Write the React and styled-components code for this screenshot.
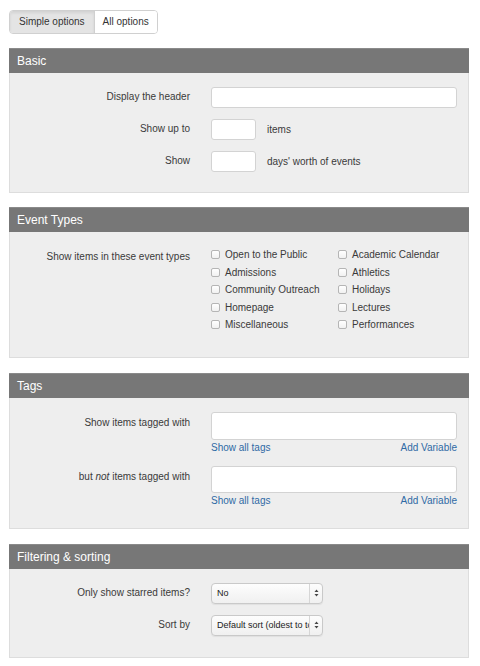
import React from "react";
import styled, { createGlobalStyle } from "styled-components";

const Global = createGlobalStyle`
  html, body { margin: 0; padding: 0; background: #fff; }
  body { font-family: "Liberation Sans", Arial, Helvetica, sans-serif; color: #3a3a3a; font-size: 10px; }
  * { box-sizing: border-box; }
`;

const Page = styled.div`
  width: 480px;
  padding: 10px 11px 0 9px;
`;

const Tabs = styled.div`
  display: inline-flex;
  border: 1px solid #d0d0d0;
  border-radius: 4px;
  overflow: hidden;
  margin-bottom: 14px;
`;

const Tab = styled.div`
  height: 22px;
  line-height: 22px;
  padding: 0 ${(p) => (p.$active ? "9px" : "8px")};
  font-size: 10px;
  color: #333;
  background: ${(p) => (p.$active ? "#e4e4e4" : "#fff")};
  box-shadow: ${(p) => (p.$active ? "inset 0 2px 3px rgba(0,0,0,0.08)" : "none")};
  & + & { border-left: 1px solid #d0d0d0; }
`;

const Panel = styled.section`
  margin-bottom: ${(p) => p.$gap || 14}px;
`;

const PanelHeader = styled.div`
  height: 25px;
  line-height: 25px;
  background: #777;
  border-top: 1px solid #8a8a8a;
  color: #fff;
  font-size: 12px;
  padding-left: 8px;
`;

const PanelBody = styled.div`
  background: #eee;
  border: 1px solid #ddd;
  border-top: none;
  padding: 14px 11px ${(p) => p.$pb || 20}px 0;
  display: flex;
  flex-direction: column;
  gap: ${(p) => p.$gap || 11}px;
`;

const Row = styled.div`
  display: grid;
  grid-template-columns: 180px 1fr;
  column-gap: 21px;
  align-items: start;
`;

const Label = styled.div`
  text-align: right;
  font-size: 10px;
  color: #3a3a3a;
  line-height: 14px;
  padding-top: ${(p) => p.$pt ?? 3}px;
  white-space: nowrap;
`;

const Inline = styled.div`
  display: flex;
  align-items: center;
  gap: 11px;
  height: 21px;
`;

const TextInput = styled.div`
  width: ${(p) => p.$w || "100%"};
  height: ${(p) => p.$h || 21}px;
  background: #fff;
  border: 1px solid #d3d3d3;
  border-radius: 3px;
`;

const Suffix = styled.span`
  font-size: 10px;
  color: #3a3a3a;
`;

const CheckGrid = styled.div`
  display: grid;
  grid-template-columns: 127px 127px;
  grid-auto-flow: column;
  grid-template-rows: repeat(5, 17.5px);
`;

const CheckItem = styled.label`
  display: flex;
  align-items: center;
  gap: 5px;
  font-size: 10px;
  color: #3a3a3a;
  white-space: nowrap;
`;

const Box = styled.span`
  width: 9px;
  height: 9px;
  border: 1px solid #b5b5b5;
  border-radius: 2px;
  background: linear-gradient(#fff, #f1f1f1);
  flex: none;
`;

const TagField = styled.div`
  display: flex;
  flex-direction: column;
  gap: 1px;
`;

const LinkRow = styled.div`
  display: flex;
  justify-content: space-between;
  line-height: 13px;
`;

const Link = styled.a`
  color: #2e6aa5;
  font-size: 10px;
  text-decoration: none;
`;

const Select = styled.div`
  display: flex;
  width: 112px;
  height: 21px;
  border: 1px solid #c9c9c9;
  border-radius: 4px;
  background: linear-gradient(#fdfdfd, #f0f0f0);
  box-shadow: 0 1px 1px rgba(0,0,0,0.06);
  overflow: hidden;
`;

const SelectText = styled.span`
  flex: 1;
  min-width: 0;
  overflow: hidden;
  white-space: nowrap;
  font-size: 9px;
  line-height: 19px;
  padding-left: 5px;
  color: #222;
`;

const SelectArrow = styled.span`
  width: 13px;
  flex: none;
  border-left: 1px solid #d6d6d6;
  display: flex;
  align-items: center;
  justify-content: center;
`;

const Arrows = () => (
  <svg width="5" height="8" viewBox="0 0 5 8">
    <path d="M2.5 0.5 L4.5 3 L0.5 3 Z" fill="#444" />
    <path d="M2.5 7.5 L4.5 5 L0.5 5 Z" fill="#444" />
  </svg>
);

const types = [
  "Open to the Public",
  "Admissions",
  "Community Outreach",
  "Homepage",
  "Miscellaneous",
  "Academic Calendar",
  "Athletics",
  "Holidays",
  "Lectures",
  "Performances",
];

export default function App() {
  return (
    <Page>
      <Global />
      <Tabs>
        <Tab $active>Simple options</Tab>
        <Tab>All options</Tab>
      </Tabs>

      <Panel>
        <PanelHeader>Basic</PanelHeader>
        <PanelBody $pb={20}>
          <Row>
            <Label>Display the header</Label>
            <TextInput />
          </Row>
          <Row>
            <Label>Show up to</Label>
            <Inline>
              <TextInput $w="45px" />
              <Suffix>items</Suffix>
            </Inline>
          </Row>
          <Row>
            <Label>Show</Label>
            <Inline>
              <TextInput $w="45px" />
              <Suffix>days' worth of events</Suffix>
            </Inline>
          </Row>
        </PanelBody>
      </Panel>

      <Panel $gap={15}>
        <PanelHeader>Event Types</PanelHeader>
        <PanelBody $pb={23}>
          <Row>
            <Label $pt={4}>Show items in these event types</Label>
            <CheckGrid>
              {types.map((t) => (
                <CheckItem key={t}>
                  <Box />
                  {t}
                </CheckItem>
              ))}
            </CheckGrid>
          </Row>
        </PanelBody>
      </Panel>

      <Panel $gap={15}>
        <PanelHeader>Tags</PanelHeader>
        <PanelBody $pb={21} $gap={12}>
          <Row>
            <Label $pt={4}>Show items tagged with</Label>
            <TagField>
              <TextInput $h={28} />
              <LinkRow>
                <Link href="#">Show all tags</Link>
                <Link href="#">Add Variable</Link>
              </LinkRow>
            </TagField>
          </Row>
          <Row>
            <Label $pt={4}>
              but <i>not</i> items tagged with
            </Label>
            <TagField>
              <TextInput $h={27} />
              <LinkRow>
                <Link href="#">Show all tags</Link>
                <Link href="#">Add Variable</Link>
              </LinkRow>
            </TagField>
          </Row>
        </PanelBody>
      </Panel>

      <Panel>
        <PanelHeader>Filtering &amp; sorting</PanelHeader>
        <PanelBody $pb={21}>
          <Row>
            <Label>Only show starred items?</Label>
            <Select>
              <SelectText>No</SelectText>
              <SelectArrow><Arrows /></SelectArrow>
            </Select>
          </Row>
          <Row>
            <Label>Sort by</Label>
            <Select>
              <SelectText>Default sort (oldest to top)</SelectText>
              <SelectArrow><Arrows /></SelectArrow>
            </Select>
          </Row>
        </PanelBody>
      </Panel>
    </Page>
  );
}
